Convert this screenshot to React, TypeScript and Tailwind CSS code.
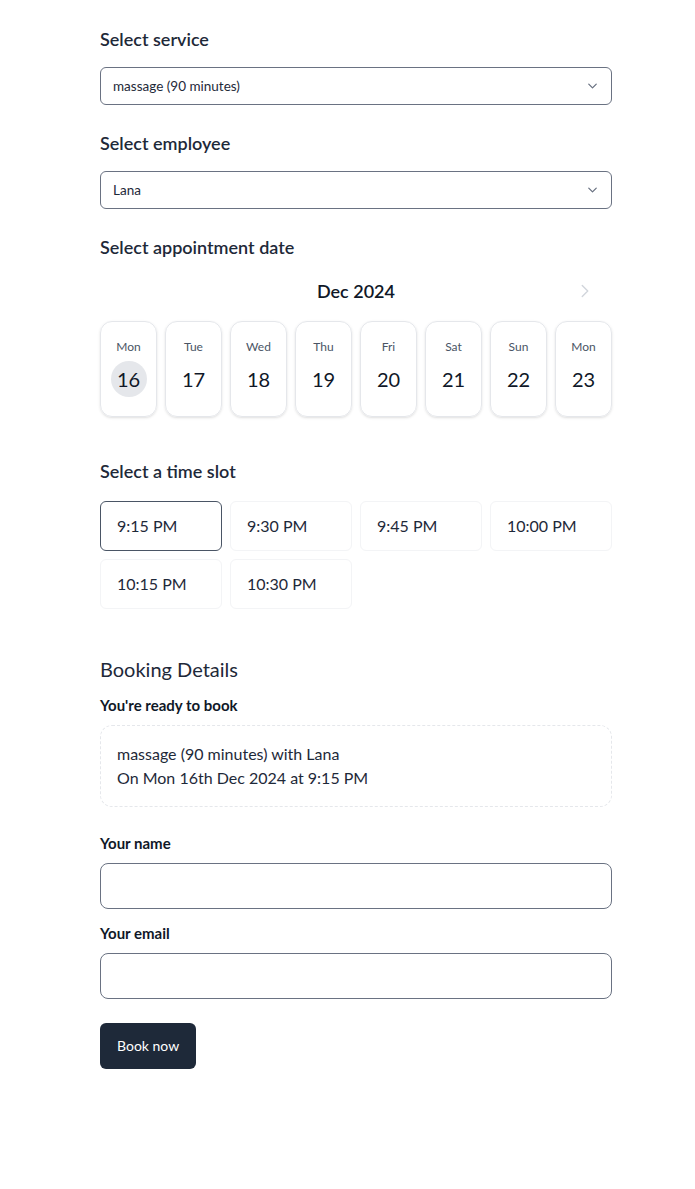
import { ChevronDown, ChevronRight } from "lucide-react";

const days = [
  { name: "Mon", num: 16 },
  { name: "Tue", num: 17 },
  { name: "Wed", num: 18 },
  { name: "Thu", num: 19 },
  { name: "Fri", num: 20 },
  { name: "Sat", num: 21 },
  { name: "Sun", num: 22 },
  { name: "Mon", num: 23 },
];

const slots = ["9:15 PM", "9:30 PM", "9:45 PM", "10:00 PM", "10:15 PM", "10:30 PM"];

const SelectBox = ({ value }: { value: string }) => (
  <div className="relative">
    <select
      defaultValue={value}
      className="block w-full appearance-none rounded-md border border-gray-500 bg-white py-2 pl-3 pr-10 text-[13.5px] leading-5 text-gray-800 outline-none"
    >
      <option>{value}</option>
    </select>
    <ChevronDown
      size={15}
      strokeWidth={2}
      className="pointer-events-none absolute right-3 top-1/2 -translate-y-1/2 text-gray-500"
    />
  </div>
);

const App = () => {
  return (
    <div
      className="min-h-[1189px] bg-white text-gray-800"
      style={{ fontFamily: "Lato, 'Noto Sans', sans-serif" }}
    >
      <div className="ml-[100px] w-[512px] pt-[25px] pb-20">
        <h2 className="text-lg font-semibold leading-7">Select service</h2>
        <div className="mt-3.5">
          <SelectBox value="massage (90 minutes)" />
        </div>

        <h2 className="mt-6 text-lg font-semibold leading-7">Select employee</h2>
        <div className="mt-3.5">
          <SelectBox value="Lana" />
        </div>

        <h2 className="mt-6 text-lg font-semibold leading-7">Select appointment date</h2>
        <div className="relative mt-4 flex items-center justify-center">
          <span className="text-lg font-semibold leading-7 text-gray-900">Dec 2024</span>
          <ChevronRight
            size={22}
            strokeWidth={1.5}
            className="absolute right-[16px] top-1/2 -translate-y-1/2 text-gray-300"
          />
        </div>
        <div className="mt-4 grid grid-cols-8 gap-2">
          {days.map((d, i) => (
            <div
              key={i}
              className="flex h-24 flex-col items-center gap-1.5 rounded-xl border border-gray-200 pt-[17px] shadow-sm"
            >
              <span className="text-xs leading-4 text-gray-600">{d.name}</span>
              <span
                className={`flex h-9 w-9 items-center justify-center rounded-full text-xl text-gray-900 ${
                  i === 0 ? "bg-gray-200" : ""
                }`}
              >
                {d.num}
              </span>
            </div>
          ))}
        </div>

        <h2 className="mt-10 text-lg font-semibold leading-7">Select a time slot</h2>
        <div className="mt-4 grid grid-cols-4 gap-2">
          {slots.map((s, i) => (
            <button
              key={s}
              className={`h-[50px] rounded-md border px-4 text-left text-base text-gray-800 ${
                i === 0 ? "border-gray-600" : "border-gray-100"
              }`}
            >
              {s}
            </button>
          ))}
        </div>

        <h3 className="mt-[46px] text-xl leading-7 text-gray-800">Booking Details</h3>
        <p className="mt-2.5 text-[15px] font-bold leading-6 text-gray-900">You're ready to book</p>
        <div className="mt-2 rounded-xl border border-dashed border-gray-200 p-4 text-base leading-6 text-gray-800">
          <p>massage (90 minutes) with Lana</p>
          <p>On Mon 16th Dec 2024 at 9:15 PM</p>
        </div>

        <label className="mt-6 block text-[15px] font-bold leading-6 text-gray-900">Your name</label>
        <input
          type="text"
          className="mt-2 block h-[46px] w-full rounded-lg border border-gray-500 px-3 outline-none"
        />
        <label className="mt-3 block text-[15px] font-bold leading-6 text-gray-900">Your email</label>
        <input
          type="email"
          className="mt-2 block h-[46px] w-full rounded-lg border border-gray-500 px-3 outline-none"
        />

        <button className="mt-6 h-[46px] rounded-md bg-gray-800 px-[17px] text-sm text-white">
          Book now
        </button>
      </div>
    </div>
  );
};

export default App;
